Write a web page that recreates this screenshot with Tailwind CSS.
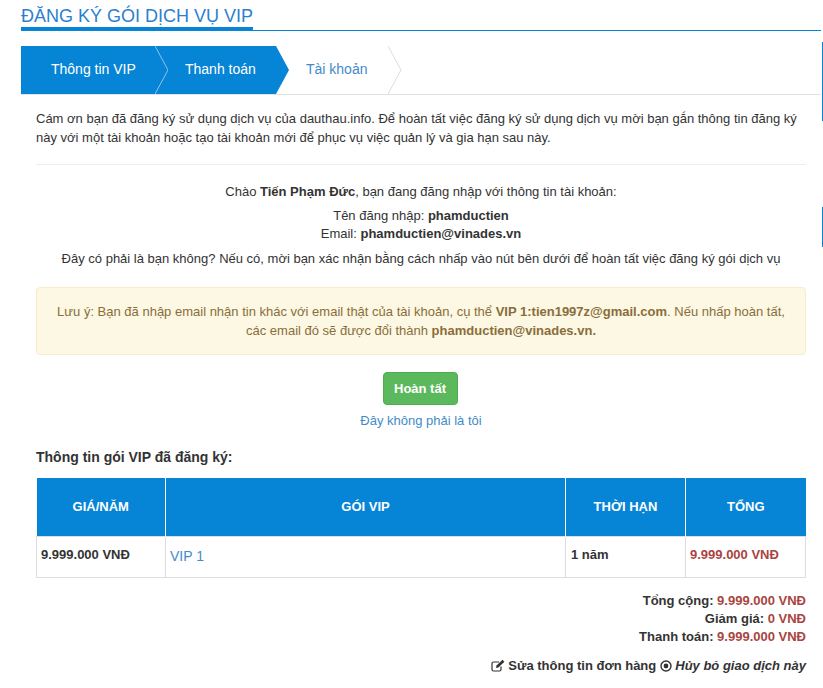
<!DOCTYPE html>
<html lang="en">
    <head>
        <meta charset="UTF-8" />
        <meta name="viewport" content="width=device-width, initial-scale=1.0" />
        <title>Đăng ký gói dịch vụ VIP</title>
        <script src="https://cdn.jsdelivr.net/npm/@tailwindcss/browser@4"></script>
    </head>
    <body class="bg-white font-['Liberation_Sans',Arial,sans-serif] text-[13px] leading-[20px] text-[#333] h-[688px] overflow-hidden relative">
        <!-- Edge marks on the right of the window -->
        <div class="absolute right-0 top-[42px] h-[79px] w-px bg-[#0684d6]"></div>
        <div class="absolute right-0 top-[207px] h-[40px] w-px bg-[#0684d6]"></div>

        <div class="ml-[21px] w-[800px] pt-[7px]">
            <!-- Title -->
            <div class="border-b border-[#0684d6] h-[24px]">
                <h1 class="inline-block h-[24px] w-[232px] border-b-[4px] border-[#0684d6] text-[18px] leading-[18px] text-[#2a7fd0] whitespace-nowrap">ĐĂNG KÝ GÓI DỊCH VỤ VIP</h1>
            </div>

            <!-- Steps -->
            <div class="mt-[15px] flex h-[49px] border-b border-[#e2e2e2] text-[14px]">
                <div class="w-[134px] bg-[#0684d6] pl-[30px] leading-[47px] text-white">Thông tin VIP</div>
                <svg class="shrink-0" width="13" height="48" viewBox="0 0 13 48">
                    <rect width="13" height="48" fill="#0684d6" />
                    <path d="M0 0 L13 24 L0 48" fill="none" stroke="#8cc4ea" stroke-width="1" />
                </svg>
                <div class="w-[108px] bg-[#0684d6] pl-[17px] leading-[47px] text-white">Thanh toán</div>
                <svg class="shrink-0" width="13" height="48" viewBox="0 0 13 48">
                    <path d="M0 0 L13 24 L0 48 Z" fill="#0684d6" />
                </svg>
                <div class="w-[99px] pl-[17px] leading-[47px] text-[#428bca]">Tài khoản</div>
                <svg class="shrink-0" width="14" height="48" viewBox="0 0 14 48">
                    <path d="M0 0 L13 24 L0 48" fill="none" stroke="#dddddd" stroke-width="1" />
                </svg>
            </div>

            <div class="px-[15px] w-[800px]">
                <p class="mt-[14px] leading-[19px]">Cám ơn bạn đã đăng ký sử dụng dịch vụ của dauthau.info. Để hoàn tất việc đăng ký sử dụng dịch vụ mời bạn gắn thông tin đăng ký này với một tài khoản hoặc tạo tài khoản mới để phục vụ việc quản lý và gia hạn sau này.</p>
                <hr class="mt-[17px] border-[#eeeeee]" />

                <div class="text-center">
                    <p class="mt-[17px]">Chào <strong>Tiến Phạm Đức</strong>, bạn đang đăng nhập với thông tin tài khoản:</p>
                    <p class="mt-[5px] leading-[18px]">Tên đăng nhập: <strong>phamductien</strong></p>
                    <p class="leading-[18px]">Email: <strong>phamductien@vinades.vn</strong></p>
                    <p class="mt-[6px]">Đây có phải là bạn không? Nếu có, mời bạn xác nhận bằng cách nhấp vào nút bên dưới để hoàn tất việc đăng ký gói dịch vụ</p>
                </div>

                <div class="mt-[18px] h-[68px] rounded-[4px] border border-[#faebcc] bg-[#fcf8e3] px-[15px] pt-[14px] text-center leading-[19px] text-[#8a6d3b]">
                    <p>Lưu ý: Bạn đã nhập email nhận tin khác với email thật của tài khoản, cụ thể <strong>VIP 1:tien1997z@gmail.com</strong>. Nếu nhấp hoàn tất, các email đó sẽ được đổi thành <strong>phamductien@vinades.vn.</strong></p>
                </div>

                <div class="mt-[17px] flex flex-col items-center">
                    <button class="mr-[2px] h-[33px] w-[75px] rounded-[4px] border border-[#4cae4c] bg-[#5cb85c] font-bold text-white">Hoàn tất</button>
                    <a class="mt-[6px] text-[#428bca]">Đây không phải là tôi</a>
                </div>

                <h2 class="mt-[16px] text-[14px] font-bold">Thông tin gói VIP đã đăng ký:</h2>

                <table class="mt-[11px] w-[769px] table-fixed border-collapse">
                    <thead>
                        <tr class="h-[58px] bg-[#0684d6] font-bold text-white">
                            <th class="w-[129px] border-r border-white">GIÁ/NĂM</th>
                            <th class="w-[400px] border-r border-white">GÓI VIP</th>
                            <th class="w-[120px] border-r border-white">THỜI HẠN</th>
                            <th class="w-[120px]">TỔNG</th>
                        </tr>
                    </thead>
                    <tbody>
                        <tr class="h-[41px] border border-[#dddddd]">
                            <td class="border-r border-[#dddddd] pl-[4px] pb-[4px] font-bold">9.999.000 VNĐ</td>
                            <td class="border-r border-[#dddddd] pl-[4px] pb-[2px] text-[14px] text-[#428bca]">VIP 1</td>
                            <td class="border-r border-[#dddddd] pl-[5px] pb-[4px] font-bold">1 năm</td>
                            <td class="pl-[4px] pb-[4px] font-bold text-[#a94442]">9.999.000 VNĐ</td>
                        </tr>
                    </tbody>
                </table>

                <div class="mt-[14px] text-right font-bold leading-[18px]">
                    <p>Tổng cộng: <span class="text-[#a94442]">9.999.000 VNĐ</span></p>
                    <p>Giảm giá: <span class="text-[#a94442]">0 VNĐ</span></p>
                    <p>Thanh toán: <span class="text-[#a94442]">9.999.000 VNĐ</span></p>
                </div>

                <div class="mt-[10px] flex items-center justify-end gap-[3px] font-bold">
                    <svg width="14" height="13" viewBox="0 0 14 13" fill="none" stroke="#333" stroke-width="1.2">
                        <path d="M10 7.5 V10.5 A1.5 1.5 0 0 1 8.5 12 H2.5 A1.5 1.5 0 0 1 1 10.5 V4.5 A1.5 1.5 0 0 1 2.5 3 H8" />
                        <path d="M5 9 L5.5 6.5 L11.5 0.8 L13.4 2.7 L7.4 8.5 Z" fill="#333" stroke="none" />
                    </svg>
                    <span>Sửa thông tin đơn hàng</span>
                    <svg width="12" height="12" viewBox="0 0 12 12" fill="none" class="ml-px">
                        <circle cx="6" cy="6" r="5" stroke="#333" stroke-width="1.4" />
                        <circle cx="6" cy="6" r="2.4" fill="#333" />
                    </svg>
                    <em>Hủy bỏ giao dịch này</em>
                </div>
            </div>
        </div>
    </body>
</html>
